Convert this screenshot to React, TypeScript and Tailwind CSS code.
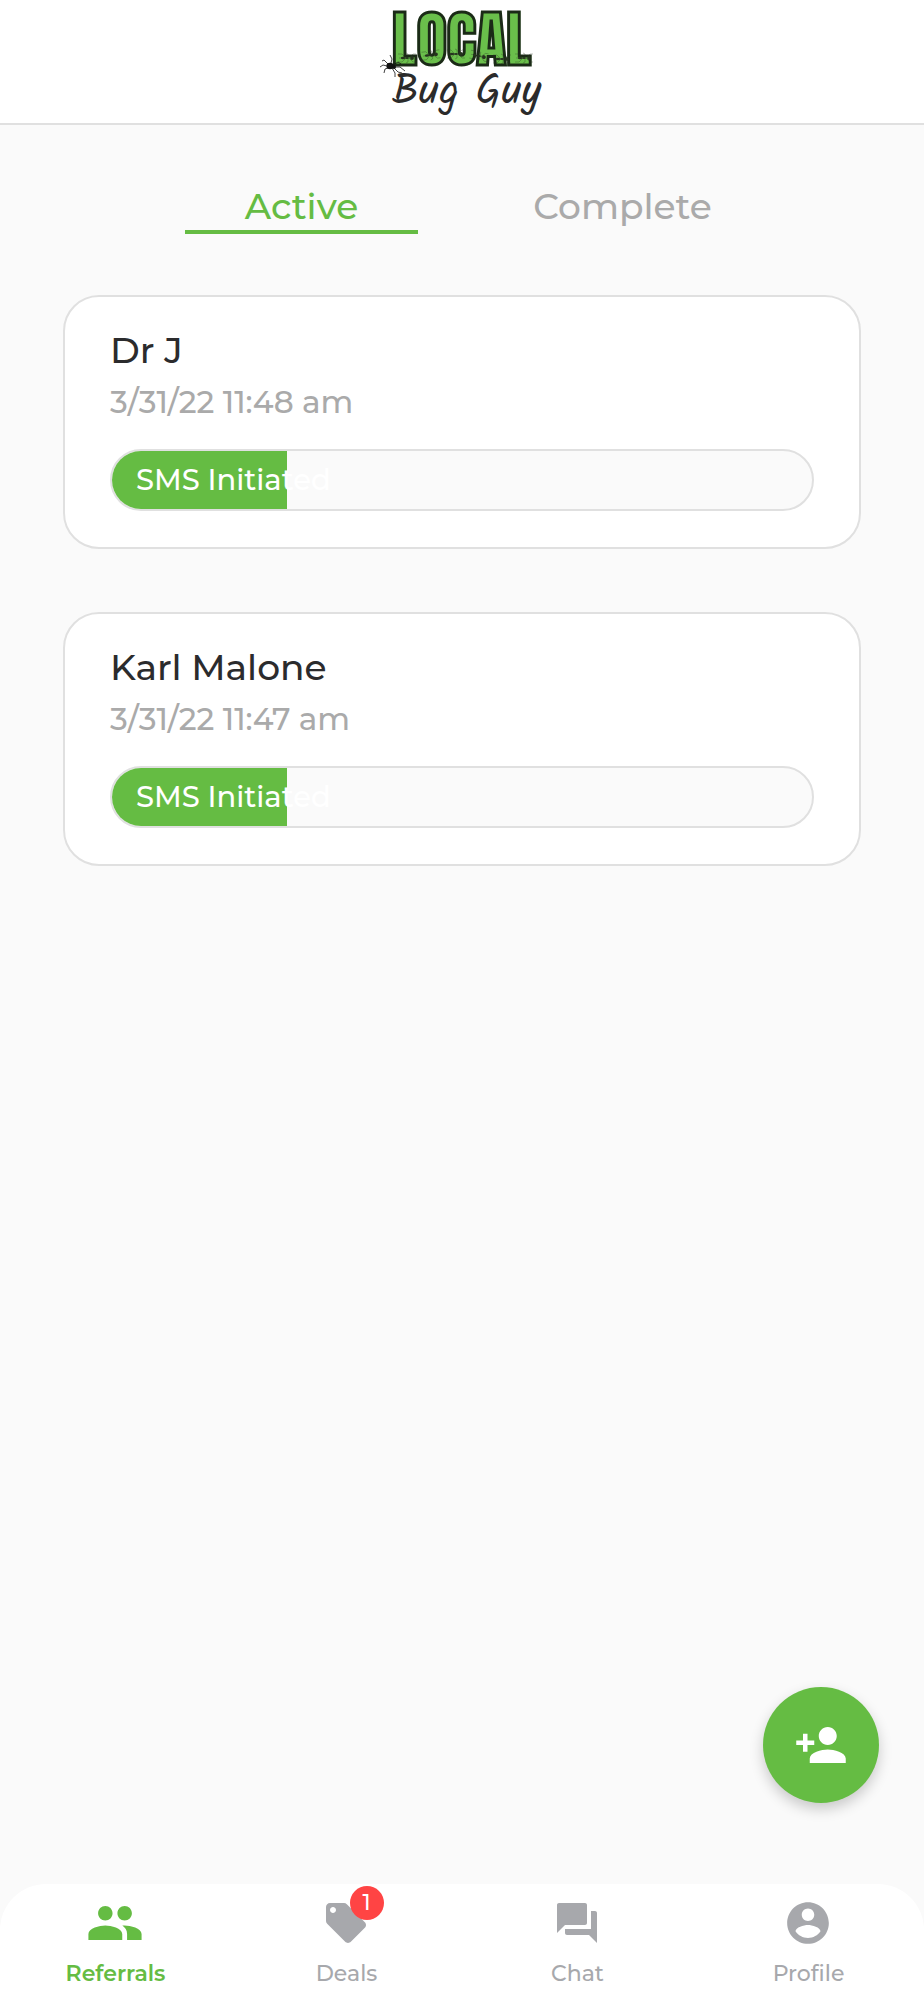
import { useState } from "react";

type IconProps = { path: string; className: string };

function Icon({ path, className }: IconProps) {
  return (
    <svg viewBox="0 0 24 24" fill="currentColor" aria-hidden="true" className={className}>
      <path d={path} />
    </svg>
  );
}

const PEOPLE =
  "M16 11c1.66 0 2.99-1.34 2.99-3S17.66 5 16 5s-3 1.34-3 3 1.34 3 3 3zm-8 0c1.66 0 2.99-1.34 2.99-3S9.66 5 8 5 5 6.34 5 8s1.34 3 3 3zm0 2c-2.33 0-7 1.17-7 3.5V19h14v-2.5c0-2.33-4.67-3.5-7-3.5zm8 0c-.29 0-.62.02-.97.05 1.16.84 1.97 1.97 1.97 3.45V19h6v-2.5c0-2.33-4.67-3.5-7-3.5z";
const TAG =
  "M21.41 11.58l-9-9C12.05 2.22 11.55 2 11 2H4c-1.1 0-2 .9-2 2v7c0 .55.22 1.05.59 1.42l9 9c.36.36.86.58 1.41.58s1.05-.22 1.41-.59l7-7c.37-.36.59-.86.59-1.41s-.23-1.06-.59-1.42zM5.5 7C4.67 7 4 6.33 4 5.5S4.67 4 5.5 4 7 4.67 7 5.5 6.33 7 5.5 7z";
const FORUM =
  "M21 6h-2v9H6v2c0 .55.45 1 1 1h11l4 4V7c0-.55-.45-1-1-1zm-4 6V3c0-.55-.45-1-1-1H3c-.55 0-1 .45-1 1v14l4-4h10c.55 0 1-.45 1-1z";
const ACCOUNT =
  "M12 2C6.48 2 2 6.48 2 12s4.48 10 10 10 10-4.48 10-10S17.52 2 12 2zm0 3c1.66 0 3 1.34 3 3s-1.34 3-3 3-3-1.34-3-3 1.34-3 3-3zm0 14.2c-2.5 0-4.71-1.28-6-3.22.03-1.99 4-3.08 6-3.08 1.99 0 5.97 1.09 6 3.08-1.29 1.94-3.5 3.22-6 3.22z";
const PERSON_ADD =
  "M15 12c2.21 0 4-1.79 4-4s-1.79-4-4-4-4 1.79-4 4 1.79 4 4 4zm-9-2V7H4v3H1v2h3v3h2v-3h3v-2H6zm9 4c-2.67 0-8 1.34-8 4v2h16v-2c0-2.66-5.33-4-8-4z";

const ants = [
  { x: 35, y: 58, r: 0 },
  { x: 59, y: 55, r: -8 },
  { x: 84, y: 54, r: 0 },
  { x: 107, y: 56, r: 12 },
  { x: 130, y: 59, r: 0 },
  { x: 152, y: 58, r: 0 },
];

function Logo() {
  return (
    <svg viewBox="0 0 180 123" className="h-[123px] w-[180px]" role="img" aria-label="Local Bug Guy">
      <text
        x="20"
        y="65"
        fill="#6abf4b"
        stroke="#1b2a17"
        strokeWidth="1"
        fontFamily="Anton, Impact, 'Roboto Condensed', 'Liberation Sans Narrow', sans-serif"
        fontWeight="900"
        fontSize="62"
      >
        LOCAL
      </text>
      {ants.map((a) => (
        <g key={a.x} transform={`translate(${a.x} ${a.y}) rotate(${a.r})`} stroke="#26331f" fill="#26331f">
          <ellipse cx="-4" cy="0" rx="2.2" ry="1.2" stroke="none" />
          <ellipse cx="0" cy="0" rx="1.8" ry="1" stroke="none" />
          <circle cx="5" cy="0" r="1.9" stroke="none" />
          <path d="M-8 0H7M-1 0l-4-4-4 0M-1 0l-4 4-4 0M1 0l0-4-2-1M1 0l0 4-2 1M2 0l4-4 3 0M2 0l4 4 3 0" fill="none" strokeWidth="0.4" opacity="0.8" />
        </g>
      ))}
      <g stroke="#111" fill="none" strokeWidth="0.8">
        <ellipse cx="18" cy="66" rx="3.6" ry="3.2" fill="#111" stroke="none" />
        <circle cx="22" cy="67" r="2" fill="#111" stroke="none" />
        <path d="M16 64l-4-4-2 1M15 66l-4-1-3 2M16 68l-3 1-1 4M19 63l1-4-2-4M21 65l5-3 3 2M23 67l5 0 5 4M22 68l4 4 4 1M20 68l3 5 0 4" />
      </g>
      <text
        x="20"
        y="104"
        fill="#2b2b2b"
        fontFamily="Kalam, 'Patrick Hand', Lato, sans-serif"
        fontSize="42"
      >
        Bug Guy
      </text>
    </svg>
  );
}

const referrals = [
  { name: "Dr J", date: "3/31/22 11:48 am", status: "SMS Initiated", progress: 25 },
  { name: "Karl Malone", date: "3/31/22 11:47 am", status: "SMS Initiated", progress: 25 },
];

const tabs = ["Active", "Complete"];

const navItems = [
  { label: "Referrals", path: PEOPLE, size: "size-[58px]", badge: 0 },
  { label: "Deals", path: TAG, size: "size-[48px]", badge: 1 },
  { label: "Chat", path: FORUM, size: "size-[48px]", badge: 0 },
  { label: "Profile", path: ACCOUNT, size: "size-[50px]", badge: 0 },
];

export default function App() {
  const [tab, setTab] = useState("Active");

  return (
    <div className="flex min-h-screen flex-col bg-[#fafafa] font-['Montserrat','Inter',sans-serif] font-medium text-[#2b2b2d]">
      <header className="flex justify-center border-b-2 border-[#e0e0e0] bg-white">
        <Logo />
      </header>

      <main className="flex flex-1 flex-col">
        <div role="tablist" className="mt-[58px] flex justify-center gap-[88px]">
          {tabs.map((t) => (
            <button
              key={t}
              type="button"
              role="tab"
              aria-selected={tab === t}
              onClick={() => setTab(t)}
              className={
                "w-[233px] border-b-4 pb-px text-[36px] leading-[46px] " +
                (tab === t ? "border-[#65bc43] text-[#65bc43]" : "border-transparent text-[#aaaaaa]")
              }
            >
              {t}
            </button>
          ))}
        </div>

        <ul className="mx-[63px] mt-[61px] flex flex-col gap-[63px]">
          {referrals.map((r) => (
            <li key={r.name} className="rounded-[36px] border-2 border-[#e0e0e0] bg-white px-[45px] pb-9 pt-[31px]">
              <h2 className="text-[36px] leading-[44px]">{r.name}</h2>
              <p className="mt-2 text-[31px] leading-[44px] text-[#aaaaaa]">{r.date}</p>
              <div className="mt-[25px] flex h-[62px] overflow-hidden rounded-full border-2 border-[#e0e0e0] bg-[#fafafa]">
                <div className="flex items-center bg-[#65bc43] pl-6" style={{ width: `${r.progress}%` }}>
                  <span className="whitespace-nowrap text-[29px] text-white">{r.status}</span>
                </div>
              </div>
            </li>
          ))}
        </ul>
      </main>

      <button
        type="button"
        aria-label="Add referral"
        className="fixed bottom-[197px] right-[45px] flex size-[116px] items-center justify-center rounded-full bg-[#65bc43] text-white shadow-[0_6px_14px_rgba(0,0,0,0.2)]"
      >
        <Icon path={PERSON_ADD} className="size-[54px]" />
      </button>

      <nav className="sticky bottom-0 grid h-[116px] grid-cols-4 rounded-t-[46px] bg-white">
        {navItems.map((n, i) => (
          <a
            key={n.label}
            href={"#" + n.label.toLowerCase()}
            className={
              "flex flex-col items-center pt-2.5 text-[22px] leading-7 " +
              (i === 0 ? "font-semibold text-[#65bc43]" : "font-medium text-[#a7a8ac]")
            }
          >
            <span className="relative flex h-[58px] w-[60px] items-center justify-center pr-0.5">
              <Icon path={n.path} className={n.size + " shrink-0"} />
              {n.badge > 0 && (
                <span className="absolute -right-[7px] -top-2 flex size-[34px] items-center justify-center rounded-full bg-[#ff4444] text-[22px] text-white">
                  {n.badge}
                </span>
              )}
            </span>
            <span className="mt-2">{n.label}</span>
          </a>
        ))}
      </nav>
    </div>
  );
}
